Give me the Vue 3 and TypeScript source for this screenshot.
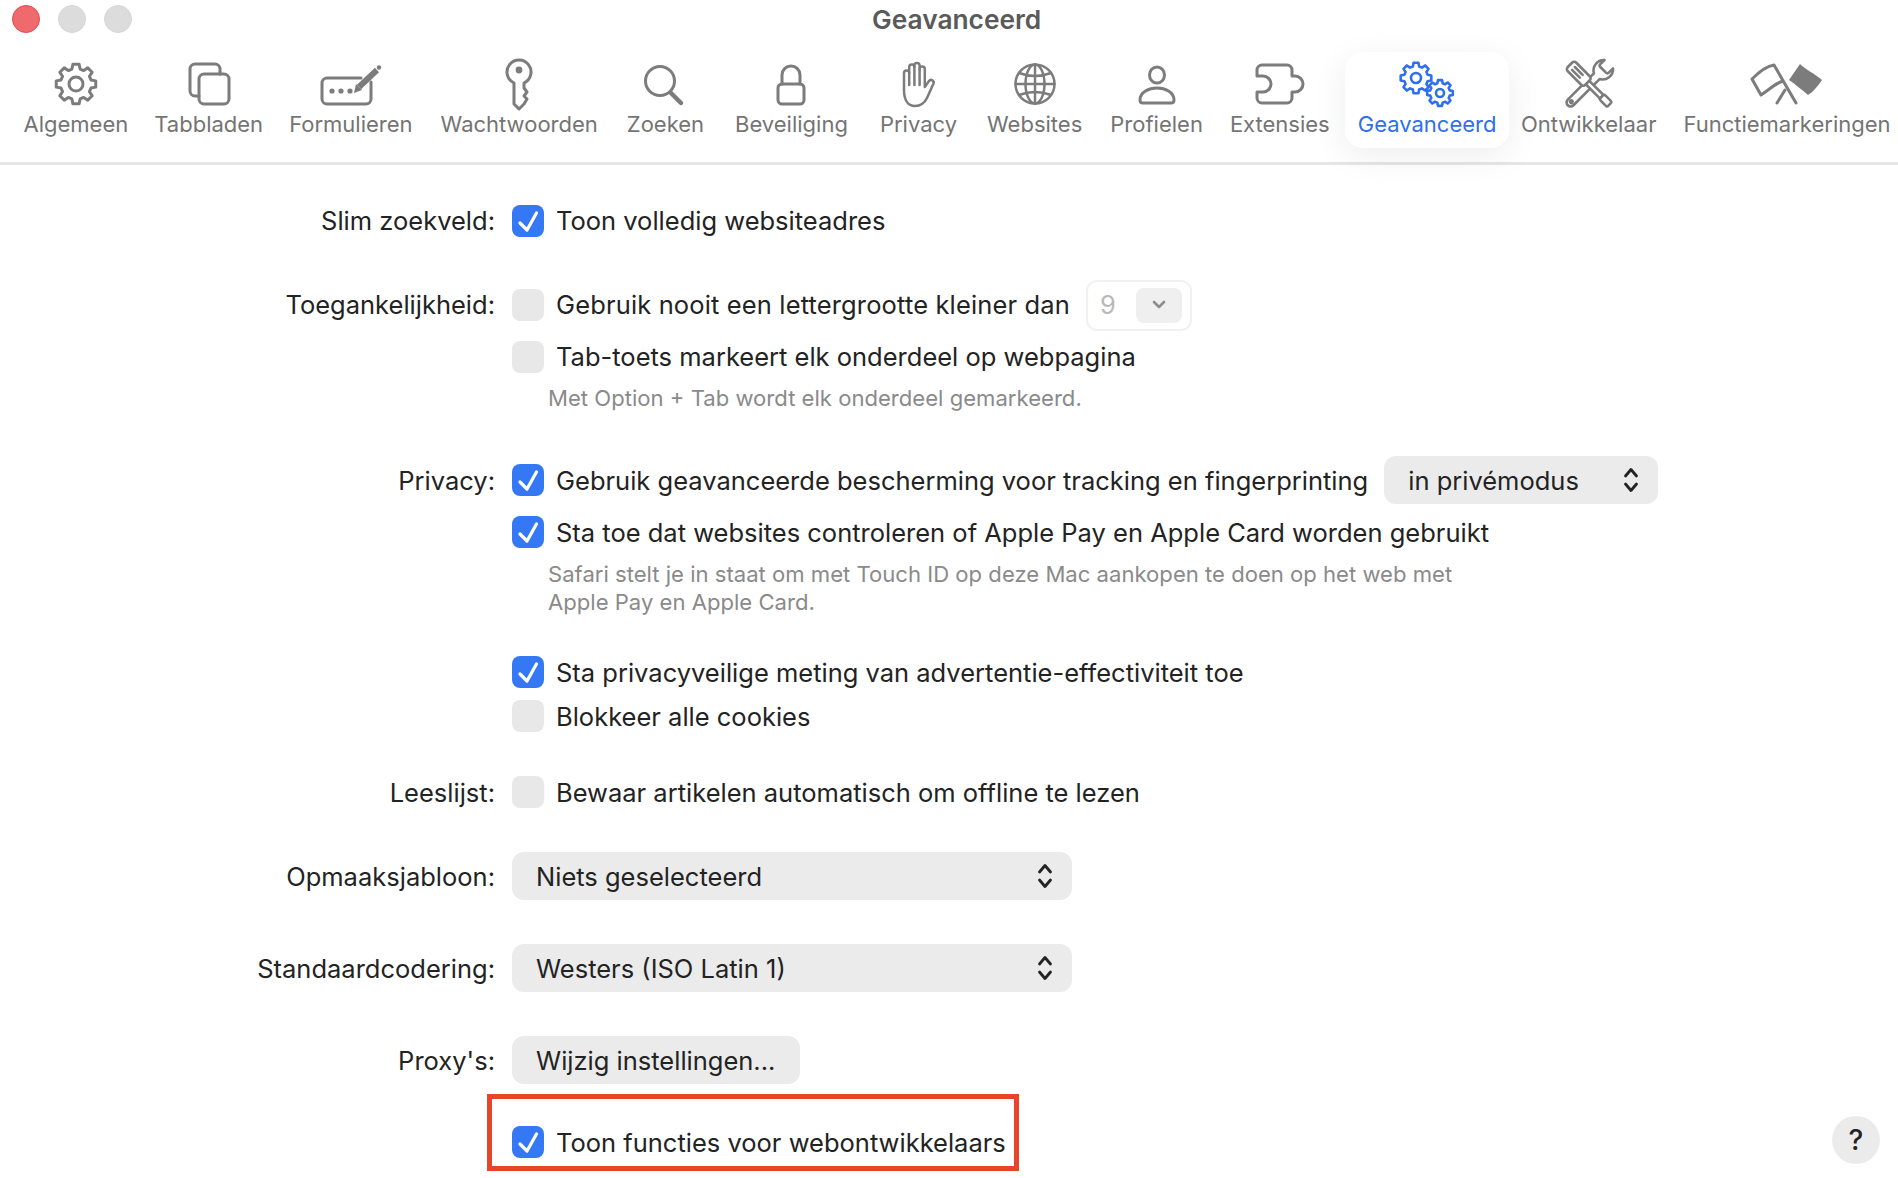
<script setup lang="ts">
function gear(cx: number, cy: number, outer: number, inner: number, teeth: number): string {
  const step = (Math.PI * 2) / teeth
  const pts: string[] = []
  for (let i = 0; i < teeth; i++) {
    const a = i * step - Math.PI / 2
    const corners: [number, number][] = [
      [inner, a - step * 0.34],
      [outer, a - step * 0.2],
      [outer, a + step * 0.2],
      [inner, a + step * 0.34],
    ]
    for (const [r, t] of corners) {
      pts.push(`${(cx + r * Math.cos(t)).toFixed(2)} ${(cy + r * Math.sin(t)).toFixed(2)}`)
    }
  }
  return 'M' + pts.join(' L') + ' Z'
}
const gearMain = gear(0, 0, 20, 15.5, 8)
const gearBig = gear(-11, -6, 15.5, 12, 8)
const gearSmall = gear(13, 9, 13, 10, 8)
</script>

<template>
  <div class="window">
    <header class="titlebar">
      <span class="light red"></span>
      <span class="light"></span>
      <span class="light"></span>
      <span class="title">Geavanceerd</span>
    </header>

    <nav class="toolbar">
      <div class="tab">
        <svg class="ico" viewBox="-36 -24 72 48"><path :d="gearMain" /><circle r="7" /></svg>
        <span>Algemeen</span>
      </div>
      <div class="tab">
        <svg class="ico" viewBox="-36 -24 72 48">
          <path d="M-10 12h-4a5 5 0 0 1-5-5V-15a5 5 0 0 1 5-5H6a5 5 0 0 1 5 5v5" />
          <rect x="-10" y="-10" width="30" height="30" rx="5" />
        </svg>
        <span>Tabbladen</span>
      </div>
      <div class="tab">
        <svg class="ico" viewBox="-36 -24 72 48">
          <path d="M10-6H-24a5 5 0 0 0-5 5V15a5 5 0 0 0 5 5H15a5 5 0 0 0 5-5V-2" />
          <circle class="solid" cx="-19" cy="7" r="2.6" />
          <circle class="solid" cx="-10" cy="7" r="2.6" />
          <circle class="solid" cx="-1" cy="7" r="2.6" />
          <path class="pen" d="M8 3 26-14" />
          <path class="solid" d="M3 9 5 0 11 6Z" />
          <circle class="solid" cx="28" cy="-16.500" r="2.200" />
        </svg>
        <span>Formulieren</span>
      </div>
      <div class="tab">
        <svg class="ico" viewBox="-36 -24 72 48">
          <path d="M-5-1A12 12 0 1 1 5-1V4L8 8 5 12 8 15 5 20 0 25-5 20Z" />
          <circle class="solid" cx="0" cy="-14" r="3.4" />
        </svg>
        <span>Wachtwoorden</span>
      </div>
      <div class="tab">
        <svg class="ico" viewBox="-36 -24 72 48">
          <circle cx="-5" cy="-3" r="14.5" />
          <path class="thick" d="M6 9 16 19" />
        </svg>
        <span>Zoeken</span>
      </div>
      <div class="tab">
        <svg class="ico" viewBox="-36 -24 72 48">
          <rect x="-13" y="0" width="26" height="20" rx="4" />
          <path d="M-9 0V-9a9 9 0 0 1 18 0V0" />
        </svg>
        <span>Beveiliging</span>
      </div>
      <div class="tab">
        <svg class="ico thin" viewBox="-36 -24 72 48">
          <path d="M-14 6V-11a2.6 2.6 0 0 1 5.2 0V-17a2.6 2.6 0 0 1 5.2 0V-18.500a2.600 2.600 0 0 1 5.200 0V-15a2.600 2.600 0 0 1 5.200 0V3L11-3a2.600 2.600 0 0 1 4.500 2.500L9 14C6 20 2 22-3 22-10 22-14 16-14 6Z" />
          <path d="M-8.800-11V1M-3.600-17V1M1.600-15V1" />
        </svg>
        <span>Privacy</span>
      </div>
      <div class="tab">
        <svg class="ico thin" viewBox="-36 -24 72 48">
          <circle r="19.500" />
          <ellipse rx="9.500" ry="19.500" />
          <path d="M0-19.500V19.500M-19.500 0H19.500M-16-11Q0-5 16-11M-16 11Q0 5 16 11" />
        </svg>
        <span>Websites</span>
      </div>
      <div class="tab">
        <svg class="ico" viewBox="-36 -24 72 48">
          <ellipse cx="0" cy="-9" rx="7.500" ry="8" />
          <path d="M-17 16C-17 8-8 4 0 4 8 4 17 8 17 16 17 18 16 19 14 19H-14C-16 19-17 18-17 16Z" />
        </svg>
        <span>Profielen</span>
      </div>
      <div class="tab">
        <svg class="ico" viewBox="-36 -24 72 48">
          <path d="M-23-14a5 5 0 0 1 5-5H7a5 5 0 0 1 5 5V-8H15a8 8 0 0 1 0 16H12V14a5 5 0 0 1-5 5H-18a5 5 0 0 1-5-5V8H-17a8 8 0 0 0 0-16H-23Z" />
        </svg>
        <span>Extensies</span>
      </div>
      <div class="tab active">
        <div class="tile-ico">
          <svg class="ico blue" viewBox="-36 -24 72 48">
            <path :d="gearBig" /><circle cx="-11" cy="-6" r="5" />
            <path :d="gearSmall" /><circle cx="13" cy="9" r="4" />
          </svg>
        </div>
        <span>Geavanceerd</span>
      </div>
      <div class="tab">
        <svg class="ico tools" viewBox="-36 -24 72 48">
          <g transform="rotate(45)">
            <path d="M-4-11A10.500 10.500 0 0 1-6-28V-22a2 2 0 0 0 2 2H4a2 2 0 0 0 2-2V-28A10.500 10.500 0 0 1 4-11V26a4 4 0 0 1-8 0Z" />
            <circle cy="25" r="1.300" />
          </g>
          <g transform="rotate(-45)">
            <rect x="-6" y="-27" width="12" height="25" rx="3" />
            <path d="M-2-22V-11M2-22V-11" />
            <rect x="-2.500" y="-2" width="5" height="20" />
            <rect x="-3.500" y="18" width="7" height="11" rx="2" />
          </g>
        </svg>
        <span>Ontwikkelaar</span>
      </div>
      <div class="tab">
        <svg class="ico" viewBox="-36 -24 72 48">
          <path d="M9 19-13-19C-20-18-28-12-35-5L-26 11C-18 6-13 0-4-3" />
          <path d="M-10 19-2 6" />
          <path class="solid" d="M13-20C18-15 28-10 35-4 30 3 26 8 21 11 15 6 8 0 2-4Z" />
        </svg>
        <span>Functiemarkeringen</span>
      </div>
    </nav>

    <main class="form">
      <section class="row">
        <div class="label">Slim zoekveld:</div>
        <div class="body">
          <div class="check">
            <span class="box on"><svg viewBox="0 0 32 32"><path d="M8 18l7 7L24.500 8" /></svg></span>
            Toon volledig websiteadres
          </div>
        </div>
      </section>

      <section class="row mt52">
        <div class="label">Toegankelijkheid:</div>
        <div class="body">
          <div class="check wider">
            <span class="box"></span>
            Gebruik nooit een lettergrootte kleiner dan
            <span class="mini">
              <span class="nine">9</span>
              <span class="mini-btn"><svg viewBox="0 0 14 10"><path d="M2 2l5 5 5-5" /></svg></span>
            </span>
          </div>
          <div class="check mt20">
            <span class="box"></span>
            Tab-toets markeert elk onderdeel op webpagina
          </div>
          <p class="help">Met Option + Tab wordt elk onderdeel gemarkeerd.</p>
        </div>
      </section>

      <section class="row low mt52">
        <div class="label">Privacy:</div>
        <div class="body">
          <div class="check">
            <span class="box on"><svg viewBox="0 0 32 32"><path d="M8 18l7 7L24.500 8" /></svg></span>
            Gebruik geavanceerde bescherming voor tracking en fingerprinting
            <span class="select private">
              in privémodus
              <svg class="updown" viewBox="0 0 16 28"><path d="M2.500 10l5.500-6.500 5.500 6.500M2.500 18l5.500 6.500 5.500-6.500" /></svg>
            </span>
          </div>
          <div class="check mt20">
            <span class="box on"><svg viewBox="0 0 32 32"><path d="M8 18l7 7L24.500 8" /></svg></span>
            Sta toe dat websites controleren of Apple Pay en Apple Card worden gebruikt
          </div>
          <p class="help">Safari stelt je in staat om met Touch ID op deze Mac aankopen te doen op het web met<br />Apple Pay en Apple Card.</p>
          <div class="check mt40">
            <span class="box on"><svg viewBox="0 0 32 32"><path d="M8 18l7 7L24.500 8" /></svg></span>
            Sta privacyveilige meting van advertentie-effectiviteit toe
          </div>
          <div class="check mt12">
            <span class="box"></span>
            Blokkeer alle cookies
          </div>
        </div>
      </section>

      <section class="row low mt44">
        <div class="label">Leeslijst:</div>
        <div class="body">
          <div class="check">
            <span class="box"></span>
            Bewaar artikelen automatisch om offline te lezen
          </div>
        </div>
      </section>

      <section class="row tall low mt44">
        <div class="label">Opmaaksjabloon:</div>
        <div class="body">
          <span class="select wide">
            Niets geselecteerd
            <svg class="updown" viewBox="0 0 16 28"><path d="M2.500 10l5.500-6.500 5.500 6.500M2.500 18l5.500 6.500 5.500-6.500" /></svg>
          </span>
        </div>
      </section>

      <section class="row tall low mt44">
        <div class="label">Standaardcodering:</div>
        <div class="body">
          <span class="select wide">
            Westers (ISO Latin 1)
            <svg class="updown" viewBox="0 0 16 28"><path d="M2.500 10l5.500-6.500 5.500 6.500M2.500 18l5.500 6.500 5.500-6.500" /></svg>
          </span>
        </div>
      </section>

      <section class="row tall low mt44">
        <div class="label">Proxy's:</div>
        <div class="body">
          <span class="select proxy">Wijzig instellingen...</span>
        </div>
      </section>

      <div class="highlight low">
        <div class="check">
          <span class="box on"><svg viewBox="0 0 32 32"><path d="M8 18l7 7L24.500 8" /></svg></span>
          Toon functies voor webontwikkelaars
        </div>
      </div>

      <span class="helpbtn">?</span>
    </main>
  </div>
</template>

<style>
html, body { margin: 0; background: #fff; }
</style>

<style scoped>
.window {
  position: relative;
  width: 1898px;
  height: 1178px;
  overflow: hidden;
  background: #fff;
  color: #232323;
  font-family: Inter, "Liberation Sans", sans-serif;
}
.titlebar {
  display: flex;
  align-items: center;
  gap: 18px;
  height: 38px;
  padding-left: 12px;
}
.light {
  width: 26px;
  height: 26px;
  border-radius: 50%;
  background: #dcdcdc;
  border: 1px solid #d6d6d6;
}
.light.red { background: #ef6a6d; border-color: #e4494e; }
.title {
  margin-left: 722px;
  font-size: 26.3px;
  font-weight: 600;
  color: #5a5a5a;
}
.toolbar {
  display: flex;
  align-items: flex-start;
  height: 110px;
  margin-top: 14px;
  padding-left: 10px;
  border-bottom: 3px solid #e6e6e6;
  box-sizing: content-box;
}
.tab {
  position: relative;
  display: flex;
  flex-direction: column;
  align-items: center;
  flex: none;
  height: 96px;
  padding: 8px 13.5px 0;
  box-sizing: border-box;
  border-radius: 18px;
  font-size: 22px;
  line-height: 28px;
  color: #747474;
}
.tab:nth-child(2) { margin-left: -1px; }
.tab:nth-child(3) { margin-left: -1px; }
.tab:nth-child(4) { margin-left: 1px; }
.tab:nth-child(5) { margin-left: 2px; }
.tab:nth-child(6) { margin-left: 4px; }
.tab:nth-child(7) { margin-left: 5px; }
.tab:nth-child(8) { margin-left: 3px; }
.tab:nth-child(9) { margin-left: 1px; }
.tab:nth-child(12) { margin-left: -1.5px; }
.tab.active {
  margin-left: 2px;
  padding: 8px 12.5px 0;
  background: #fff;
  color: #2f6fed;
  box-shadow: 0 8px 36px rgba(0, 0, 0, 0.07);
}
.ico {
  display: block;
  width: 72px;
  height: 48px;
  margin-bottom: 2px;
  overflow: visible;
  fill: none;
  stroke: #7c7c7c;
  stroke-width: 3;
  stroke-linejoin: round;
  stroke-linecap: round;
}
.ico.thin { stroke-width: 2.5; }
.ico.tools { stroke-width: 2.6; fill: #fff; }
.ico.blue { stroke: #2f6fed; stroke-width: 2.6; }
.ico .solid { fill: #7c7c7c; stroke: none; }
.ico .thick { stroke-width: 4.5; }
.ico .pen { stroke-width: 6; stroke-linecap: butt; }

.form {
  padding-top: 40px;
  font-size: 25.5px;
  line-height: 32px;
}
.row { display: flex; align-items: flex-start; }
.row.tall .label { line-height: 48px; }
.label {
  flex: none;
  width: 495px;
  text-align: right;
}
.body { margin-left: 17px; }
.check {
  display: flex;
  align-items: center;
  height: 32px;
  box-sizing: border-box;
  white-space: nowrap;
}
.check.wider { letter-spacing: 0.14px; }
.box {
  flex: none;
  display: block;
  width: 32px;
  height: 32px;
  margin-right: 12px;
  border-radius: 8px;
  background: #e8e8e8;
}
.box.on { background: #3478f6; }
.box svg {
  display: block;
  width: 32px;
  height: 32px;
  fill: none;
  stroke: #fff;
  stroke-width: 3.2;
  stroke-linecap: round;
  stroke-linejoin: round;
}
.help {
  margin: 11px 0 0 36px;
  font-size: 22.1px;
  line-height: 28px;
  color: #8a8a8a;
}
.low .help { margin-top: 12px; }
.mini {
  flex: none;
  display: flex;
  align-items: center;
  justify-content: space-between;
  width: 106px;
  height: 51px;
  margin-left: 16px;
  padding: 0 8px 0 12px;
  box-sizing: border-box;
  border: 2px solid #f1f1f1;
  border-radius: 11px;
}
.nine { color: #b8b8b8; }
.mini-btn {
  display: flex;
  align-items: center;
  justify-content: center;
  width: 46px;
  height: 35px;
  border-radius: 8px;
  background: #efefef;
}
.mini-btn svg {
  width: 14px;
  height: 10px;
  fill: none;
  stroke: #8d8d8d;
  stroke-width: 2.6;
  stroke-linecap: round;
  stroke-linejoin: round;
}
.select {
  flex: none;
  display: flex;
  align-items: center;
  justify-content: space-between;
  height: 48px;
  padding: 0 19px 0 24px;
  box-sizing: border-box;
  border-radius: 12px;
  background: #ebebeb;
}
.select.wide { width: 560px; }
.select.private { width: 274px; margin-left: 16px; }
.select.proxy { width: 288px; }
.updown {
  flex: none;
  width: 16px;
  height: 28px;
  fill: none;
  stroke: #232323;
  stroke-width: 2.8;
  stroke-linecap: round;
  stroke-linejoin: round;
}
.low .check, .low .select { padding-top: 2px; }
.low .box, .low .updown { margin-top: -2px; }
.low .select.private { margin-top: -2px; }
.low .label { padding-top: 1px; margin-bottom: -1px; }
.highlight {
  width: 532px;
  height: 77px;
  margin: 10px 0 0 487px;
  padding: 27px 0 0 20px;
  box-sizing: border-box;
  border: 5px solid #e8442a;
}
.helpbtn {
  position: absolute;
  right: 18px;
  bottom: 14px;
  display: flex;
  align-items: center;
  justify-content: center;
  width: 48px;
  height: 48px;
  border-radius: 50%;
  background: #ebebeb;
  font-size: 28px;
  font-weight: 500;
}
.mt12 { margin-top: 12px; }
.mt20 { margin-top: 20px; }
.mt40 { margin-top: 40px; }
.mt44 { margin-top: 44px; }
.mt52 { margin-top: 52px; }
</style>
